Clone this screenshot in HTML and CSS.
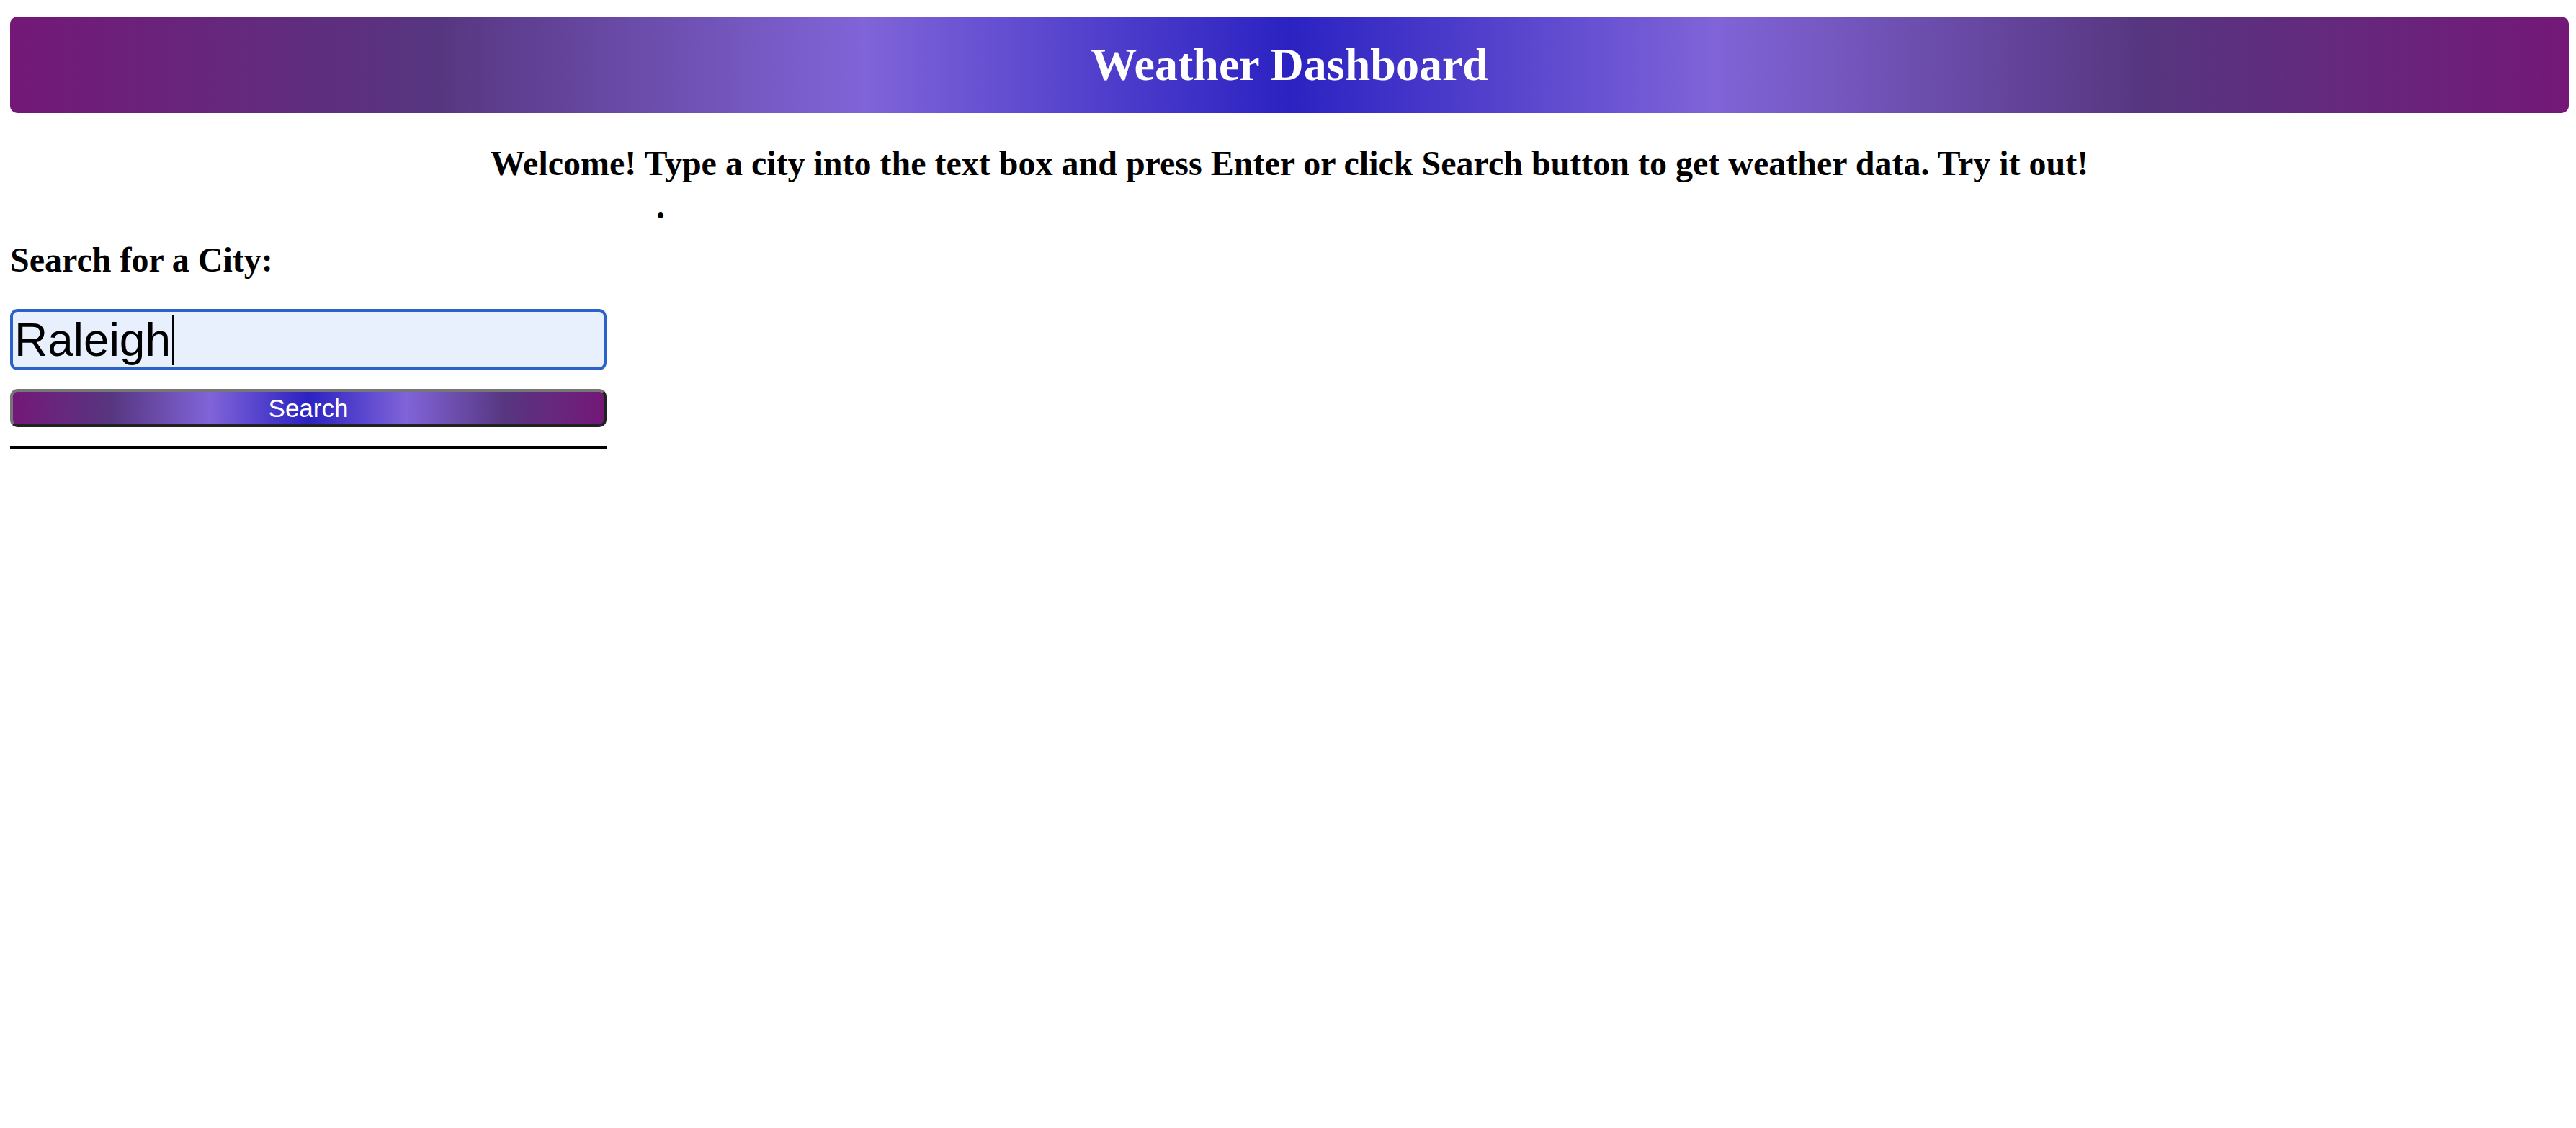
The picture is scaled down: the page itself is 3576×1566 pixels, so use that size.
FILE: index.html
```html
<!DOCTYPE html>
<html lang="en">
<head>
<meta charset="utf-8">
<title>Weather Dashboard</title>
<link rel="stylesheet" href="styles.css">
</head>
<body>
<div class="page">
  <header class="banner">
    <h1 class="banner-title">Weather Dashboard</h1>
  </header>
  <h2 class="welcome">Welcome! Type a city into the text box and press Enter or click Search button to get weather data. Try it out!</h2>
  <div class="dot-line">.</div>
  <aside class="sidebar">
    <h2 class="search-title">Search for a City:</h2>
    <div class="input-wrap">
      <input class="city-input" type="text" value="Raleigh">
      <span class="caret"></span>
    </div>
    <button class="search-btn" type="button">Search</button>
    <hr class="divider">
  </aside>
</div>
</body>
</html>
```
FILE: styles.css
```css
html, body {
  margin: 0;
  padding: 0;
  background: #ffffff;
}

.page {
  padding: 23px 10px 0 14px;
  font-family: "Liberation Serif", "Times New Roman", serif;
  color: #000;
}

.banner {
  height: 134px;
  border-radius: 10px;
  background: linear-gradient(to right, #741878 0%, #573680 16.67%, #8064d8 33.33%, #2b22c2 50%, #8064d8 66.67%, #573680 83.33%, #741878 100%);
  display: flex;
  align-items: center;
  justify-content: center;
}

.banner-title {
  margin: 0;
  color: #ffffff;
  font-size: 64px;
  font-weight: bold;
  line-height: 74px;
}

.welcome {
  margin: 40px 0 0 0;
  font-size: 48px;
  font-weight: bold;
  line-height: 60px;
  text-align: center;
}

.dot-line {
  font-size: 48px;
  font-weight: bold;
  line-height: 60px;
  padding-left: 897px;
}

.sidebar {
  width: 828px;
  display: flex;
  flex-direction: column;
}

.search-title {
  margin: 16px 0 0 0;
  font-size: 48px;
  font-weight: bold;
  line-height: 56px;
}

.input-wrap {
  position: relative;
  margin: 40px 0 0 0;
  width: 828px;
  height: 85px;
}

.city-input {
  box-sizing: border-box;
  display: block;
  margin: 0;
  width: 828px;
  height: 85px;
  padding: 3px 2px;
  border: 4px solid #2b62c9;
  border-radius: 10px;
  background: #e8f0fe;
  font-family: "Liberation Sans", Arial, sans-serif;
  font-size: 64px;
  line-height: 71px;
  color: #000;
  outline: none;
}

.caret {
  position: absolute;
  left: 225px;
  top: 8px;
  width: 2px;
  height: 70px;
  background: #000;
}

.search-btn {
  box-sizing: border-box;
  margin: 26px 0 0 0;
  width: 828px;
  height: 53px;
  padding: 0;
  border-style: solid;
  border-width: 4px;
  border-color: #767676 #222222 #222222 #767676;
  border-radius: 10px;
  background: linear-gradient(to right, #741878 0%, #573680 16.67%, #8064d8 33.33%, #2b22c2 50%, #8064d8 66.67%, #573680 83.33%, #741878 100%);
  color: #ffffff;
  font-family: "Liberation Sans", Arial, sans-serif;
  font-size: 35px;
  line-height: 45px;
}

.divider {
  margin: 26px 0 0 0;
  width: 828px;
  height: 0;
  border: none;
  border-top: 4px solid #000;
}
```
